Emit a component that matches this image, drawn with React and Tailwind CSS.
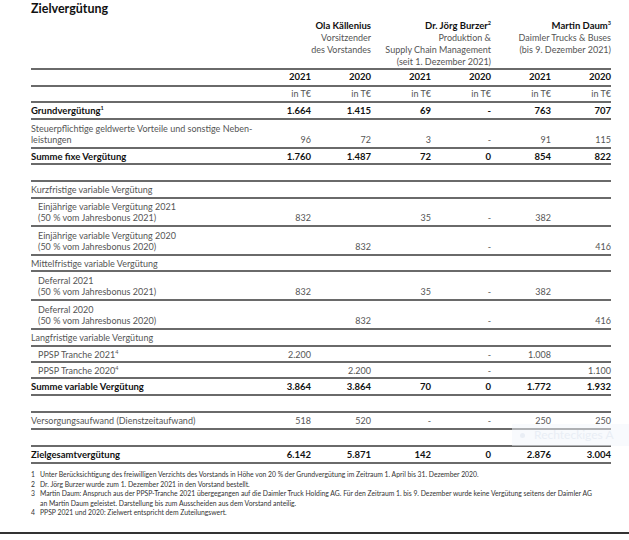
const F = { fontFamily: 'Lato, "Liberation Sans", sans-serif' };

const sup = (n) => <sup className="text-[5.5px] top-[-0.7em]">{n}</sup>;

const ROWS = [
  { h: 'h-[17px]', bold: true, lines: [<>Grundvergütung{sup(1)}</>], values: ['1.664', '1.415', '69', '-', '763', '707'] },
  { h: 'h-[29px]', lines: ['Steuerpflichtige geldwerte Vorteile und sonstige Neben-', 'leistungen'], values: ['96', '72', '3', '-', '91', '115'] },
  { h: 'h-[16px]', bold: true, lines: ['Summe fixe Vergütung'], values: ['1.760', '1.487', '72', '0', '854', '822'] },
  { spacer: true },
  { h: 'h-[17px]', lines: ['Kurzfristige variable Vergütung'] },
  { h: 'h-[28px]', indent: true, lines: ['Einjährige variable Vergütung 2021', '(50 % vom Jahresbonus 2021)'], values: ['832', '', '35', '-', '382', ''] },
  { h: 'h-[29px]', indent: true, lines: ['Einjährige variable Vergütung 2020', '(50 % vom Jahresbonus 2020)'], values: ['', '832', '', '-', '', '416'] },
  { h: 'h-[16px]', lines: ['Mittelfristige variable Vergütung'] },
  { h: 'h-[29px]', indent: true, lines: ['Deferral 2021', '(50 % vom Jahresbonus 2021)'], values: ['832', '', '35', '-', '382', ''] },
  { h: 'h-[29px]', indent: true, lines: ['Deferral 2020', '(50 % vom Jahresbonus 2020)'], values: ['', '832', '', '-', '', '416'] },
  { h: 'h-[17px]', lines: ['Langfristige variable Vergütung'] },
  { h: 'h-[16px]', indent: true, lines: [<>PPSP Tranche 2021{sup(4)}</>], values: ['2.200', '', '', '-', '1.008', ''] },
  { h: 'h-[16px]', indent: true, lines: [<>PPSP Tranche 2020{sup(4)}</>], values: ['', '2.200', '', '-', '', '1.100'] },
  { h: 'h-[17px]', bold: true, lines: ['Summe variable Vergütung'], values: ['3.864', '3.864', '70', '0', '1.772', '1.932'] },
  { spacer: true },
  { h: 'h-[17px]', lines: ['Versorgungsaufwand (Dienstzeitaufwand)'], values: ['518', '520', '-', '-', '250', '250'] },
  { spacer: true },
  { h: 'h-[17px]', bold: true, lines: ['Zielgesamtvergütung'], values: ['6.142', '5.871', '142', '0', '2.876', '3.004'] },
];

const NAMES = [
  { name: 'Ola Källenius', sub: ['Vorsitzender', 'des Vorstandes'] },
  { name: <>Dr. Jörg Burzer{sup(2)}</>, sub: ['Produktion &', 'Supply Chain Management', '(seit 1. Dezember 2021)'] },
  { name: <>Martin Daum{sup(3)}</>, sub: ['Daimler Trucks & Buses', '(bis 9. Dezember 2021)'] },
];

const NOTES = [
  ['1', 'Unter Berücksichtigung des freiwilligen Verzichts des Vorstands in Höhe von 20 % der Grundvergütung im Zeitraum 1. April bis 31. Dezember 2020.'],
  ['2', 'Dr. Jörg Burzer wurde zum 1. Dezember 2021 in den Vorstand bestellt.'],
  ['3', 'Martin Daum: Anspruch aus der PPSP-Tranche 2021 übergegangen auf die Daimler Truck Holding AG. Für den Zeitraum 1. bis 9. Dezember wurde keine Vergütung seitens der Daimler AG', 'an Martin Daum geleistet. Darstellung bis zum Ausscheiden aus dem Vorstand anteilig.'],
  ['4', 'PPSP 2021 und 2020: Zielwert entspricht dem Zuteilungswert.'],
];

function Row({ row }) {
  if (row.spacer) return <div className="h-[17px] border-b-2 border-[#6a6a6a]" />;
  const tone = row.bold ? 'font-bold text-[#111] text-[9.5px]' : 'text-[#555] text-[9px]';
  const multi = row.lines.length > 1;
  return (
    <div className={`flex items-center border-b-2 border-[#6a6a6a] ${row.h} ${tone}`}>
      <div className={`w-[220px] shrink-0 ${row.indent ? 'pl-[7px]' : ''}`}>
        {row.lines.map((l, i) => (
          <div key={i} className="leading-[11px] whitespace-nowrap">{l}</div>
        ))}
      </div>
      {row.values && row.values.map((v, i) => (
        <div key={i} className="w-[60px] shrink-0 text-right">
          {multi && <div className="leading-[11px]">{'\u00a0'}</div>}
          <div className="leading-[11px]">{v || '\u00a0'}</div>
        </div>
      ))}
    </div>
  );
}

export default function App() {
  return (
    <div className="relative w-[629px] h-[540px] bg-white overflow-hidden" style={F}>
      <div className="ml-[31px] w-[580px]">
        <div className="h-[20px] pt-[1px] text-[12.5px] font-bold text-[#111] leading-[16px]">Zielvergütung</div>

        <div className="h-[50px] flex border-b-2 border-[#6a6a6a]">
          <div className="w-[220px] shrink-0" />
          {NAMES.map((n, i) => (
            <div key={i} className="w-[120px] shrink-0 text-right text-[9px] leading-[12px]">
              <div className="font-bold text-[#111] text-[9.5px]">{n.name}</div>
              {n.sub.map((s) => (
                <div key={s} className="text-[#555]">{s}</div>
              ))}
            </div>
          ))}
        </div>

        <div className="h-[17px] flex items-center border-b-2 border-[#6a6a6a] font-bold text-[9.5px] text-[#111]">
          <div className="w-[220px] shrink-0" />
          {['2021', '2020', '2021', '2020', '2021', '2020'].map((y, i) => (
            <div key={i} className="w-[60px] shrink-0 text-right">{y}</div>
          ))}
        </div>

        <div className="h-[16px] flex items-center border-b-2 border-[#6a6a6a] text-[9px] text-[#555]">
          <div className="w-[220px] shrink-0" />
          {[0, 1, 2, 3, 4, 5].map((i) => (
            <div key={i} className="w-[60px] shrink-0 text-right">in T€</div>
          ))}
        </div>

        {ROWS.map((r, i) => <Row key={i} row={r} />)}

        <div className="pt-[6px] text-[6.8px] leading-[9.5px] text-[#333]">
          {NOTES.map(([n, ...t]) => (
            <div key={n} className="flex">
              <div className="w-[9px] shrink-0">{n}</div>
              <div>
                {t.map((line) => (
                  <div key={line} className="whitespace-nowrap">{line}</div>
                ))}
              </div>
            </div>
          ))}
        </div>
      </div>

      <div className="absolute left-0 right-0 top-[532px] h-[2px] bg-[#333]" />

      {/* faint snipping-tool hint over the lower right */}
      <div className="absolute left-[512px] top-[424px] w-[117px] h-[22px] bg-[#f2f6fb]/50 flex items-center gap-[9px] pl-[8px] text-[12px] text-[#e9eef5]">
        <span className="w-[5px] h-[5px] rounded-full bg-[#e9eef5]" />
        <span>Rechteckiges A</span>
      </div>
    </div>
  );
}
